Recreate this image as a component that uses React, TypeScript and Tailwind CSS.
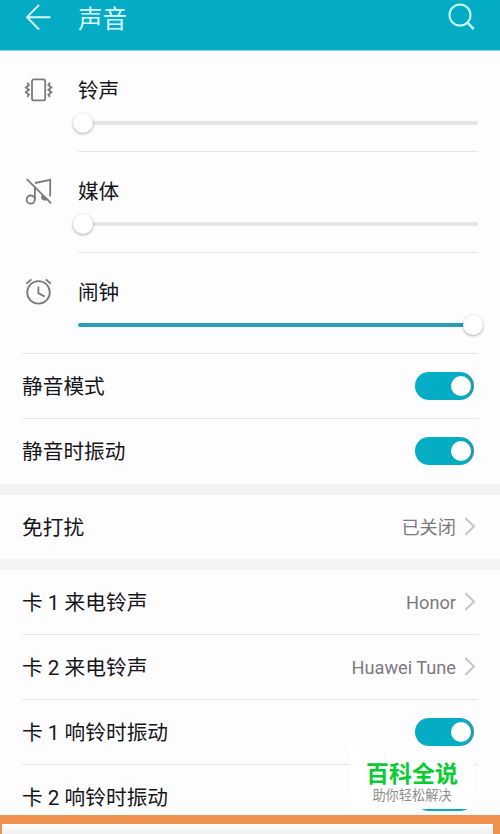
import type { ReactNode } from "react";

// ─── Icons ────────────────────────────────────────────────────────────────────

function BackIcon() {
  return (
    <svg width="28" height="28" viewBox="0 0 28 28" fill="none" stroke="#d8fbfb" strokeWidth="1.9">
      <path d="M15 2 3 14.2 15 26.5M3 14.2H26.5" />
    </svg>
  );
}

function SearchIcon() {
  return (
    <svg width="28" height="28" viewBox="0 0 28 28" fill="none" stroke="#c9fafa" strokeWidth="2.1">
      <circle cx="12" cy="12" r="10.5" />
      <path d="m19.4 19.6 6.4 6.6" strokeWidth="2.5" />
    </svg>
  );
}

function VibrateIcon() {
  return (
    <svg width="30" height="30" viewBox="0 0 30 30" fill="none" stroke="#7c7c7e" strokeWidth="1.8">
      <rect x="9" y="4.4" width="13.2" height="21" rx="2" />
      <path d="m4.3 7.6 1.6 2.4-3 2.4 3 2.4-3 2.4 3 2.4-1.6 2.4" strokeWidth="1.9" />
      <path d="m27 7.6-1.6 2.4 3 2.4-3 2.4 3 2.4-3 2.4 1.6 2.4" strokeWidth="1.9" />
    </svg>
  );
}

function MediaMutedIcon() {
  return (
    <svg width="30" height="30" viewBox="0 0 30 30" fill="none" stroke="#7c7c7e" strokeWidth="1.8">
      <circle cx="7.7" cy="23.6" r="4.1" />
      <path d="M11.9 23.6V10.4M12 7 27.2 3.8V20.5" />
      <path d="M18.8 19c-1.4 2-.8 4.6 1.8 5.4 2.1.6 4-.2 4.9-1.2Z" fill="#7c7c7e" stroke="none" />
      <path d="m3.8 3.2 24.4 24.2" />
    </svg>
  );
}

function AlarmIcon() {
  return (
    <svg width="30" height="30" viewBox="0 0 30 30" fill="none" stroke="#7c7c7e" strokeWidth="1.8">
      <circle cx="15.5" cy="15.4" r="11.3" />
      <path d="M15.4 9.4v6.7l6.4 3.5M3.4 6.8l5-4.4M27.8 6.8l-5-4.4" />
    </svg>
  );
}

function Chevron() {
  return (
    <svg width="12" height="20" viewBox="0 0 12 20" fill="none" stroke="#c3c3c6" strokeWidth="1.8">
      <path d="m1.3 1 8.7 8.5-8.7 8.5" />
    </svg>
  );
}

// ─── Controls ─────────────────────────────────────────────────────────────────

function Switch() {
  return (
    <span
      role="switch"
      aria-checked="true"
      className="flex h-7 w-[59px] shrink-0 items-center justify-end rounded-full
                 bg-linear-to-r from-[#04acc4] from-82% to-[#2497a6] pr-[3px]">
      <span className="size-5 rounded-full bg-white" />
    </span>
  );
}

interface VolumeRowProps {
  icon: ReactNode;
  label: string;
  full?: boolean;
  wideDivider?: boolean;
}

function VolumeRow({ icon, label, full, wideDivider }: VolumeRowProps) {
  return (
    <div className="flex h-[101px] flex-col">
      <div className="flex flex-1 pl-[23px]">
        <div className="mt-6 w-[55px]">{icon}</div>
        <div className="flex-1 pt-[25px]">
          <div className="text-[20.6px] leading-[30px]">{label}</div>
          <div className="mt-[7px] flex h-5 items-center pr-[22px]">
            <div className={full ? "flex h-1 flex-1 items-center justify-end rounded-full bg-[#2a9fb0]" : "flex h-1 flex-1 items-center rounded-full bg-[#e5e4e7]"}>
              <span
                className={
                  full
                    ? "-mr-[5px] size-5 rounded-full bg-white shadow-[0_1px_3px_rgba(0,0,0,0.35)]"
                    : "-ml-[5px] size-5 rounded-full bg-white shadow-[0_1px_3px_rgba(0,0,0,0.35)]"
                }
              />
            </div>
          </div>
        </div>
      </div>
      <div className={wideDivider ? "ml-[22px] mr-[22px] h-px bg-[#e6e5e8]" : "ml-[78px] mr-[22px] h-px bg-[#e6e5e8]"} />
    </div>
  );
}

interface SettingRowProps {
  label: string;
  value?: string;
  last?: boolean;
}

function SettingRow({ label, value, last }: SettingRowProps) {
  return (
    <div className={last ? "mx-[22px] flex h-16 items-center" : "mx-[22px] flex h-[65px] items-center border-b border-[#e6e5e8]"}>
      <span className="flex-1 whitespace-pre pt-[2px] text-[20.7px] leading-[30px]">{label}</span>
      {value ? (
        <span className="flex items-center gap-2 pr-[2px] text-[18.2px] text-[#7b7b7e]">
          <span className="pt-px">{value}</span>
          <Chevron />
        </span>
      ) : (
        <span className="flex pr-1">
          <Switch />
        </span>
      )}
    </div>
  );
}

// ─── Page ─────────────────────────────────────────────────────────────────────

export default function App() {
  return (
    <div className="relative flex h-[834px] w-[500px] flex-col overflow-hidden bg-[#fdfcff] font-[Roboto,'Noto_Sans_CJK_SC',sans-serif] text-[#161618]">
      <header className="flex h-[51px] shrink-0 items-start border-b border-[#8fd6e0] bg-[#03abc5] pl-6 pr-6">
        <div className="mt-[3px] w-[54px]">
          <BackIcon />
        </div>
        <h1 className="mt-[2px] flex-1 text-[24.5px] leading-9 text-[#d8fbfb]">声音</h1>
        <div className="mt-[3px]">
          <SearchIcon />
        </div>
      </header>

      <VolumeRow icon={<VibrateIcon />} label="铃声" />
      <VolumeRow icon={<MediaMutedIcon />} label="媒体" />
      <VolumeRow icon={<AlarmIcon />} label="闹钟" full wideDivider />

      <SettingRow label="静音模式" />
      <SettingRow label="静音时振动" last />
      <div className="mt-px h-[11px] shrink-0 bg-[#f3f2f4]" />
      <SettingRow label="免打扰" value="已关闭" last />
      <div className="h-[11px] shrink-0 bg-[#f3f2f4]" />

      <SettingRow label="卡 1 来电铃声" value="Honor" />
      <SettingRow label="卡 2 来电铃声" value="Huawei Tune" />
      <SettingRow label="卡 1 响铃时振动" />
      <SettingRow label="卡 2 响铃时振动" last />

      {/* Highlight frame over the bottom edge */}
      <div className="absolute inset-x-0 bottom-0 h-[19px] border-l-2 border-r-[7px] border-t-9 border-[#ee914e] bg-linear-to-b from-white to-[#f1eff1]" />

      {/* Site badge */}
      <div className="absolute left-[350px] top-[748px] flex h-[61px] w-[124px] flex-col items-center bg-white">
        <span className="mt-[13px] text-[23px] font-bold leading-7 text-[#08cc31]">百科全说</span>
        <span className="-mt-px text-[13.2px] leading-4 text-[#8c8c8c]">助你轻松解决</span>
      </div>
    </div>
  );
}
